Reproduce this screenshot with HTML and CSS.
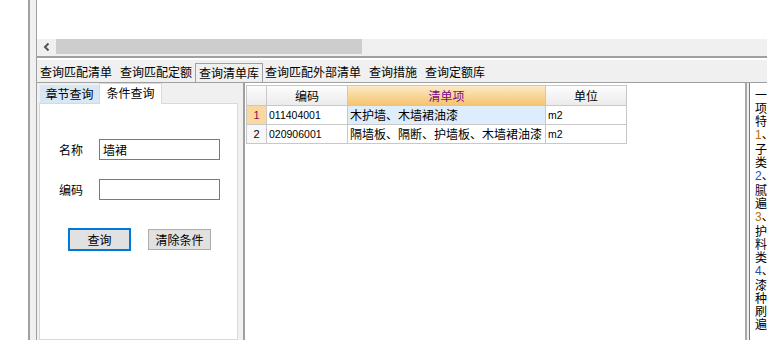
FILE: index.html
```html
<!DOCTYPE html>
<html lang="zh-CN">
<head>
<meta charset="utf-8">
<title>查询清单库</title>
<link rel="stylesheet" href="styles.css">
</head>
<body>
<div class="app">
  <div class="gutter"></div>
  <div class="main">
    <div class="inner">
      <div class="top"></div>
      <div class="hscroll">
        <span class="arrow"><svg width="19" height="16" viewBox="0 0 19 16"><path d="M11.5 4.5 L8 8 L11.5 11.5" fill="none" stroke="#555" stroke-width="2"/></svg></span>
        <span class="thumb"></span>
      </div>
      <div class="sepline"></div>
      <div class="tabbar">
        <span class="tab">查询匹配清单</span>
        <span class="tab">查询匹配定额</span>
        <span class="tab active">查询清单库</span>
        <span class="tab">查询匹配外部清单</span>
        <span class="tab">查询措施</span>
        <span class="tab">查询定额库</span>
      </div>
      <div class="content">
        <div class="leftpane">
          <div class="subtabs">
            <span class="subtab">章节查询</span>
            <span class="subtab active">条件查询</span>
          </div>
          <div class="formbox">
            <div class="row first"><span class="label">名称</span><div class="input">墙裙</div></div>
            <div class="row"><span class="label">编码</span><div class="input"></div></div>
            <div class="buttons">
              <span class="btn primary">查询</span>
              <span class="btn">清除条件</span>
            </div>
          </div>
        </div>
        <div class="gridpane">
          <div class="grid">
            <div class="cell hd rn"></div>
            <div class="cell hd">编码</div>
            <div class="cell hd hot">清单项</div>
            <div class="cell hd">单位</div>

            <div class="cell rn cur">1</div>
            <div class="cell code">011404001</div>
            <div class="cell name sel">木护墙、木墙裙油漆</div>
            <div class="cell code">m2</div>

            <div class="cell rn">2</div>
            <div class="cell code">020906001</div>
            <div class="cell name">隔墙板、隔断、护墙板、木墙裙油漆</div>
            <div class="cell code">m2</div>
          </div>
        </div>
        <div class="splitter"></div>
        <div class="notes">
          <div>一</div>
          <div>项</div>
          <div>特</div>
          <div><span class="n1">1</span>、</div>
          <div>子</div>
          <div>类</div>
          <div><span class="n2">2</span>、</div>
          <div>腻</div>
          <div>遍</div>
          <div><span class="n1">3</span>、</div>
          <div>护</div>
          <div>料</div>
          <div>类</div>
          <div><span class="n2">4</span>、</div>
          <div>漆</div>
          <div>种</div>
          <div>刷</div>
          <div>遍</div>
          <div>&nbsp;</div>
          <div>一</div>
        </div>
      </div>
    </div>
  </div>
</div>
</body>
</html>
```

FILE: styles.css
```css
* { box-sizing: border-box; }
html, body { margin: 0; padding: 0; background: #fff; }
body {
  font-family: "Noto Sans CJK SC", "Liberation Sans", sans-serif;
  font-size: 12px;
  color: #000;
}
.app {
  display: flex;
  width: 767px;
  height: 340px;
  overflow: hidden;
}
.gutter { width: 28px; flex: none; background: #fff; }
.main {
  flex: 1;
  display: flex;
  border-left: 2px solid #a0a0a0;
  background: #f0f0f0;
  padding-left: 6px;
}
.inner {
  flex: 1;
  display: flex;
  flex-direction: column;
  border-left: 1px solid #a0a0a0;
  min-width: 0;
}
.top { height: 39px; background: #fff; flex: none; }
.hscroll {
  height: 16px;
  flex: none;
  display: flex;
  background: #f0f0f0;
}
.arrow { width: 19px; height: 16px; display: block; }
.arrow svg { display: block; }
.thumb { width: 306px; height: 15px; background: #cdcdcd; }
.sepline {
  height: 5px;
  flex: none;
  border-top: 1px solid #f0f0f0;
  border-bottom: 2px solid #fff;
  background: #a0a0a0;
}
.tabbar {
  height: 23px;
  flex: none;
  display: flex;
  align-items: flex-end;
  border-bottom: 1px solid #a0a0a0;
  background: #f0f0f0;
}
.tab {
  height: 19px;
  line-height: 18px;
  padding: 0 5px 0 3px;
  white-space: nowrap;
}
.tab.active {
  border: 1px solid #a0a0a0;
  border-bottom: none;
  padding: 0 3px;
  margin-left: -2px;
  margin-right: -1px;
  background: #f0f0f0;
}
.content {
  flex: 1;
  display: flex;
  min-height: 0;
}
.leftpane {
  width: 208px;
  flex: none;
  padding-left: 2px;
  border-right: 2px solid #a0a0a0;
  display: flex;
  flex-direction: column;
}
.subtabs {
  height: 20px;
  flex: none;
  display: flex;
  align-items: flex-end;
  position: relative;
  z-index: 1;
}
.subtab {
  height: 18px;
  line-height: 18px;
  width: 59px;
  margin-left: 1px;
  text-align: center;
  background: #d9e7f5;
}
.subtab.active {
  height: 21px;
  line-height: 18px;
  width: 63px;
  margin-left: 0;
  margin-bottom: -1px;
  background: #fff;
  border: 1px solid #d9d9d9;
  border-bottom: none;
  padding-bottom: 2px;
}
.formbox {
  width: 199px;
  flex: 1;
  background: #fff;
  border: 1px solid #d9d9d9;
  padding-left: 19px;
  padding-top: 35px;
}
.row {
  display: flex;
  align-items: center;
  height: 21px;
  margin-top: 19px;
}
.row.first { margin-top: 0; }
.label { width: 40px; line-height: 21px; }
.input {
  width: 121px;
  height: 21px;
  border: 1px solid #7a7a7a;
  padding-left: 3px;
  line-height: 19px;
  background: #fff;
}
.buttons {
  display: flex;
  align-items: center;
  margin-top: 28px;
  margin-left: 9px;
  gap: 17px;
}
.btn {
  width: 63px;
  height: 21px;
  line-height: 19px;
  text-align: center;
  background: #e1e1e1;
  border: 1px solid #adadad;
}
.btn.primary {
  height: 23px;
  border: 2px solid #0078d7;
}
.gridpane {
  width: 500px;
  flex: none;
  background: #fff;
  padding-top: 2px;
  padding-left: 1px;
}
.grid {
  display: grid;
  grid-template-columns: 20px 81px 198px 81px;
  grid-auto-rows: 19px;
  grid-template-rows: 20px;
  width: 381px;
  border-left: 1px solid #c8c8c8;
  border-top: 1px solid #c8c8c8;
}
.cell {
  border-right: 1px solid #c8c8c8;
  border-bottom: 1px solid #c8c8c8;
  line-height: 18px;
  padding-left: 2px;
  white-space: nowrap;
  overflow: hidden;
}
.cell.hd {
  background: linear-gradient(#fdfdfd, #ebebeb);
  text-align: center;
  padding-left: 0;
  line-height: 19px;
}
.cell.hd.hot {
  background: linear-gradient(#fde9c6, #f5c470);
  color: #7a0a8a;
}
.cell.rn {
  text-align: center;
  padding-left: 0;
  background: #f7f7f7;
  font-family: "Liberation Sans", sans-serif;
  font-size: 11px;
}
.cell.rn.hd { background: linear-gradient(#fdfdfd, #ebebeb); }
.cell.rn.cur { background: #fbd89e; color: #7a1050; }
.cell.code {
  font-family: "Liberation Sans", sans-serif;
  font-size: 10.5px;
}
.cell.sel { background: #ddedfc; }
.splitter {
  width: 5px;
  flex: none;
  border-left: 2px solid #a9a9a9;
  border-right: 1px solid #7a7a7a;
  background: #f0f0f0;
}
.notes {
  flex: 1;
  background: #fff;
  padding: 5px 0 0 5px;
  line-height: 13px;
  white-space: nowrap;
  overflow: hidden;
}
.n1 { color: #b86e00; font-family: "Liberation Sans", sans-serif; }
.n2 { color: #1f4fa0; font-family: "Liberation Sans", sans-serif; }
```
